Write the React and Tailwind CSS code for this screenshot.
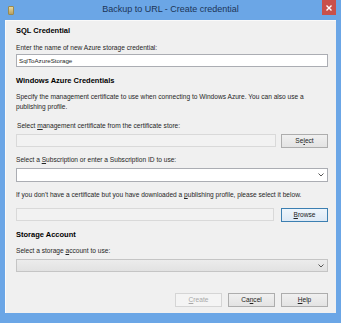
import React from 'react';

const font = { fontFamily: '"Liberation Sans", Arial, sans-serif' };

function Btn({ children, disabled, focused }) {
  return (
    <div
      className={`w-[47px] h-[14px] flex items-center justify-center text-[6.6px] leading-none border
        ${disabled ? 'border-[#d5d5d5] bg-[#f4f4f4] text-[#a8a8a8]' : focused ? 'border-[#3c7fb1] bg-gradient-to-b from-[#eef5fb] to-[#dde9f5] text-[#222]' : 'border-[#adadad] bg-gradient-to-b from-[#f0f0f0] to-[#e3e3e3] text-[#222]'}`}
    >
      {children}
    </div>
  );
}

function Chevron() {
  return (
    <svg width="6" height="4" viewBox="0 0 6 4" className="mr-[3px]">
      <path d="M0.5 0.5 L3 3 L5.5 0.5" fill="none" stroke="#555" strokeWidth="1" />
    </svg>
  );
}

export default function App() {
  return (
    <div className="w-[341px] h-[323px] bg-[#6ba6e6] flex flex-col overflow-hidden" style={font}>
      {/* Title bar */}
      <div className="h-[20px] flex items-center relative shrink-0">
        <div className="ml-[8px] w-[6px] h-[9px] bg-gradient-to-b from-[#e8d9a0] to-[#b8a060] border border-[#9a8a50] rounded-[1px]" />
        <div className="flex-1 text-center text-[9px] text-[#1c3557] pr-[14px]">Backup to URL - Create credential</div>
        <div className="absolute right-[5px] top-0 w-[14px] h-[15px] bg-[#c9504a] flex items-center justify-center">
          <svg width="6" height="6" viewBox="0 0 6 6">
            <path d="M0.5 0.5 L5.5 5.5 M5.5 0.5 L0.5 5.5" stroke="white" strokeWidth="1.4" />
          </svg>
        </div>
      </div>

      {/* Content */}
      <div className="ml-[5px] mr-[5px] h-[293px] bg-[#f0f0f0] border-l border-t border-[#fafafa] pl-[10px] pr-[8px] pt-[5px] flex flex-col text-[6.6px] text-[#262626] leading-[10px]">
        <div className="font-bold text-[7.5px] text-black">SQL Credential</div>
        <div className="mt-[7px]">Enter the name of new Azure storage credential:</div>
        <div className="mt-[1px] h-[13px] bg-white border border-[#abadb3] flex items-center px-[2px] text-[6.2px]">SqlToAzureStorage</div>

        <div className="mt-[9px] font-bold text-[7.5px] text-black">Windows Azure Credentials</div>
        <div className="mt-[6px]">Specify the management certificate to use when connecting to Windows Azure. You can also use a publishing profile.</div>

        <div className="mt-[9px] pl-[1px]">Select <span className="underline">m</span>anagement certificate from the certificate store:</div>
        <div className="mt-[3px] flex gap-[5px]">
          <div className="flex-1 h-[13px] bg-[#f2f2f2] border border-[#d9d9d9]" />
          <Btn>Se<span className="underline">l</span>ect</Btn>
        </div>

        <div className="mt-[7px]">Select a <span className="underline">S</span>ubscription or enter a Subscription ID to use:</div>
        <div className="mt-[3px] h-[14px] bg-white border border-[#abadb3] flex items-center justify-end">
          <Chevron />
        </div>

        <div className="mt-[8px] whitespace-nowrap">If you don't have a certificate but you have downloaded a <span className="underline">p</span>ublishing profile, please select it below.</div>
        <div className="mt-[8px] flex gap-[7px]">
          <div className="flex-1 h-[13px] bg-[#f2f2f2] border border-[#d9d9d9]" />
          <Btn focused><span className="underline">B</span>rowse</Btn>
        </div>

        <div className="mt-[8px] font-bold text-[7.5px] text-black">Storage Account</div>
        <div className="mt-[6px]">Select a storage <span className="underline">a</span>ccount to use:</div>
        <div className="mt-[3px] h-[13px] bg-gradient-to-b from-[#ececec] to-[#e2e2e2] border border-[#c5c5c5] flex items-center justify-end">
          <Chevron />
        </div>

        <div className="flex-1" />
        <div className="flex justify-end gap-[6px] mb-[6px]">
          <Btn disabled><span className="underline">C</span>reate</Btn>
          <Btn>Ca<span className="underline">n</span>cel</Btn>
          <Btn><span className="underline">H</span>elp</Btn>
        </div>
      </div>
    </div>
  );
}
